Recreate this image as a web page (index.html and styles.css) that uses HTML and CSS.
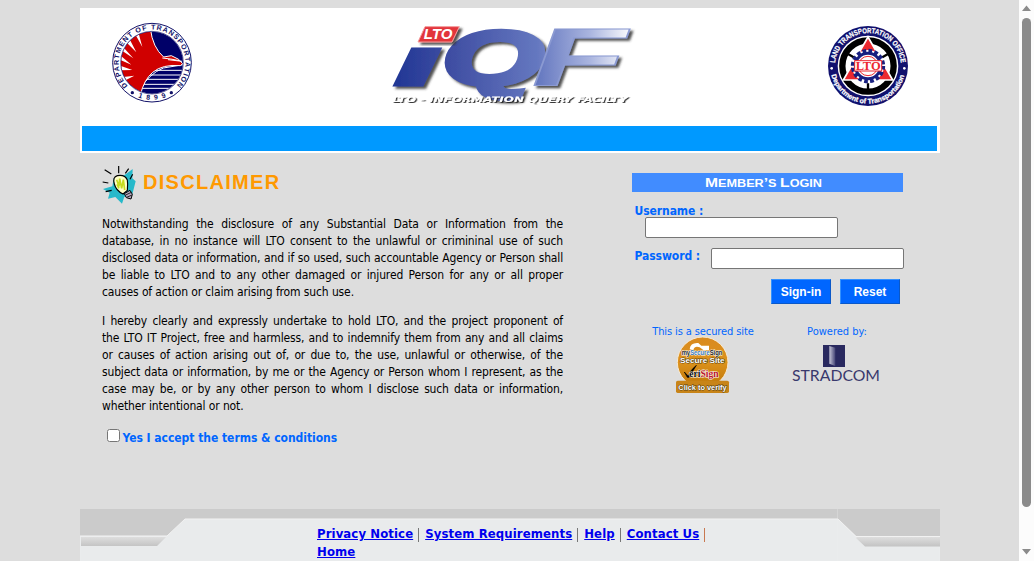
FILE: index.html
```html
<!DOCTYPE html>
<html lang="en">
<head>
<meta charset="utf-8">
<title>LTO - Information Query Facility</title>
<link rel="stylesheet" href="styles.css">
</head>
<body>
<div class="viewport">
<div class="page">
  <header class="header">
    <div class="logos">
      <svg class="dot-seal" viewBox="0 0 300 285" width="100" height="95">
        <defs>
          <clipPath id="disc"><circle cx="156" cy="143" r="93"/></clipPath>
          <path id="dotTop" d="M85 214A100 100 0 1 1 227 214"/>
          <path id="dotBottom" d="M86 230A112 112 0 0 0 226 230"/>
        </defs>
        <circle cx="156" cy="143" r="118" fill="#fff" stroke="#111168" stroke-width="3"/>
        <g clip-path="url(#disc)">
          <rect x="60" y="45" width="190" height="195" fill="#000068"/>
          <path d="M112 232Q148 175 190 159L250 149M128 208H236M137 193H250M147 180H250M162 166H250M118 220H230" stroke="#fff" stroke-width="3" fill="none"/>
          <path d="M55 40H151Q158 98 191 126L214 122L236 133L248 146L241 152Q188 147 158 172Q132 194 121 240H55Z" fill="#d00000" stroke="#fff" stroke-width="3"/>
          <path d="M187 129L212 132L238 137M204 134L246 139" stroke="#fff" stroke-width="3" fill="none"/>
          <path d="M127 96L97 42L114 48ZM109 112L67 70L82 59ZM100 130L55 100L62 88ZM94 149L55 132L58 119ZM97 165L58 166L57 151ZM103 182L66 201L60 187Z" fill="#fff"/>
        </g>
        <circle cx="156" cy="143" r="94" fill="none" stroke="#111168" stroke-width="2"/>
        <text class="seal-text" font-size="21"><textPath href="#dotTop" startOffset="2" textLength="464">DEPARTMENT OF TRANSPORTATION</textPath></text>
        <text class="seal-text" font-size="21"><textPath href="#dotBottom" startOffset="33" textLength="86">1899</textPath></text>
        <circle cx="97" cy="233" r="5" fill="#111168"/><circle cx="214" cy="233" r="5" fill="#111168"/>
      </svg>
      <svg class="iqf" viewBox="0 0 795 300" width="265" height="100">
        <defs>
          <linearGradient id="blue" gradientUnits="userSpaceOnUse" x1="45" y1="0" x2="755" y2="0">
            <stop offset="0" stop-color="#223795"/><stop offset=".25" stop-color="#4150a4"/><stop offset=".6" stop-color="#6578c0"/><stop offset=".82" stop-color="#aab5df"/><stop offset="1" stop-color="#fff"/>
          </linearGradient>
          <filter id="drop" x="-10%" y="-10%" width="125%" height="130%"><feDropShadow dx="8" dy="7" stdDeviation="2.5" flood-color="#333" flood-opacity=".85"/></filter>
          <filter id="drop2" x="-10%" y="-30%" width="125%" height="180%"><feDropShadow dx="4" dy="3" stdDeviation="1" flood-color="#222" flood-opacity=".9"/></filter>
        </defs>
        <g class="iqf-letters" filter="url(#drop)" fill="url(#blue)">
          <text x="39" y="209" font-size="206" textLength="142" lengthAdjust="spacingAndGlyphs" stroke-width="9" stroke="url(#blue)">ı</text>
          <text x="184" y="208" font-size="230" textLength="304" lengthAdjust="spacingAndGlyphs" stroke-width="14" stroke="url(#blue)">Q</text>
          <text x="452" y="213" font-size="242" textLength="284" lengthAdjust="spacingAndGlyphs" stroke-width="3" stroke="#8b9ad2">F</text>
        </g>
        <path d="M132 35H235L213 81H111Z" fill="#e2343a" stroke="#f49a9a" stroke-width="3" filter="url(#drop)"/>
        <text class="iqf-tag" x="128" y="73" font-size="43" textLength="86" lengthAdjust="spacingAndGlyphs">LTO</text>
        <text class="iqf-sub" x="34" y="261" font-size="23" textLength="706" lengthAdjust="spacingAndGlyphs" filter="url(#drop2)">LTO - INFORMATION QUERY FACILTY</text>
      </svg>
      <svg class="lto-seal" viewBox="0 0 300 300" width="100" height="100">
        <defs>
          <path id="ltoTop" d="M45 153A99 99 0 1 1 243 153"/>
          <path id="ltoBottom" d="M33 174A113 113 0 0 0 255 174"/>
        </defs>
        <circle cx="144" cy="153" r="120" fill="#11116e"/>
        <circle cx="144" cy="153" r="91" fill="#fff"/>
        <circle cx="144" cy="153" r="77" fill="none" stroke="#000" stroke-width="19"/>
        <path d="M144 205V236M75 112L101 127M213 112L187 127" stroke="#000" stroke-width="7"/>
        <path d="M144 66L218 195H70Z" fill="#ec2930" stroke="#fff" stroke-width="5"/>
        <circle cx="144" cy="153" r="48" fill="#fff"/>
        <circle cx="144" cy="153" r="45" fill="none" stroke="#182080" stroke-width="13" stroke-dasharray="11 6.67"/>
        <circle cx="144" cy="153" r="38" fill="#fff" stroke="#182080" stroke-width="9"/>
        <circle cx="144" cy="153" r="29" fill="none" stroke="#ec2930" stroke-width="3"/>
        <rect x="104" y="137" width="81" height="31" fill="#fff" stroke="#ec2930" stroke-width="3"/>
        <text class="lto-mark" x="107" y="164" font-size="35" textLength="75" lengthAdjust="spacingAndGlyphs">LTO</text>
        <text class="ring-text" font-size="22"><textPath href="#ltoTop" startOffset="9" textLength="292" lengthAdjust="spacingAndGlyphs">LAND TRANSPORTATION OFFICE</textPath></text>
        <text class="ring-text" font-size="21"><textPath href="#ltoBottom" startOffset="6" textLength="298" lengthAdjust="spacingAndGlyphs">Department of Transportation</textPath></text>
        <circle cx="35" cy="160" r="4" fill="#fff"/><circle cx="253" cy="160" r="4" fill="#fff"/>
      </svg>
    </div>
    <div class="bar"></div>
  </header>

  <main class="content">
    <section class="disclaimer">
      <h1 class="title">
        <svg viewBox="0 0 105 120" width="35" height="40">
          <path d="M3 72L31 64L35 40L68 30L92 12L91 40L101 49L92 84L88 98L67 95L60 116L40 96L18 101L23 83Z" fill="#27b9ca"/>
          <path d="M8 14L28 27M50 3V25M80 11L70 25M92 28L84 43M2 51L19 54M11 80L29 76" stroke="#000" stroke-width="3.500"/>
          <path d="M37 57Q31 36 46 32Q69 28 76 45Q78 56 76 76L63 87Q42 77 37 57Z" fill="#ffffc8" stroke="#000" stroke-width="3.500"/>
          <path d="M44 44L51 64L53 41L59 70L64 44L68 75M51 70L45 58" fill="none" stroke="#c7dc20" stroke-width="5"/>
          <path d="M67 86L84 76L91 88L87 102L73 98Z" fill="#b9a9c3" stroke="#000" stroke-width="3"/>
          <path d="M71 90L88 82M74 97L90 90" stroke="#222" stroke-width="3"/>
        </svg>
        <span class="title-text">DISCLAIMER</span>
      </h1>
      <p class="terms">
        <span>Notwithstanding the disclosure of any Substantial Data or Information from the</span>
        <span>database, in no instance will LTO consent to the unlawful or crimininal use of such</span>
        <span>disclosed data or information, and if so used, such accountable Agency or Person shall</span>
        <span>be liable to LTO and to any other damaged or injured Person for any or all proper</span>
        <span class="end">causes of action or claim arising from such use.</span>
      </p>
      <p class="terms">
        <span>I hereby clearly and expressly undertake to hold LTO, and the project proponent of</span>
        <span>the LTO IT Project, free and harmless, and to indemnify them from any and all claims</span>
        <span>or causes of action arising out of, or due to, the use, unlawful or otherwise, of the</span>
        <span>subject data or information, by me or the Agency or Person whom I represent, as the</span>
        <span>case may be, or by any other person to whom I disclose such data or information,</span>
        <span class="end">whether intentional or not.</span>
      </p>
      <label class="accept"><input type="checkbox">Yes I accept the terms &amp; conditions</label>
    </section>

    <section class="login">
      <svg class="login-head" viewBox="0 0 271 19" width="271" height="19">
        <rect width="271" height="19" fill="#418cff"/>
        <text x="73" y="14" textLength="117" lengthAdjust="spacingAndGlyphs"><tspan font-size="13">M</tspan><tspan font-size="10.5">EMBER</tspan><tspan font-size="13">’</tspan><tspan font-size="10.5">S </tspan><tspan font-size="13">L</tspan><tspan font-size="10.5">OGIN</tspan></text>
      </svg>
      <div class="field user"><label for="u">Username :</label><input id="u" type="text"></div>
      <div class="field pass"><label for="p">Password :</label><input id="p" type="password"></div>
      <div class="buttons"><button>Sign-in</button><button>Reset</button></div>
      <div class="badges">
        <div class="badge"><span class="secured">This is a secured site</span>
          <svg viewBox="108 60 165 180" width="55" height="60">
            <defs><linearGradient id="gold" x2="0" y2="1"><stop stop-color="#d98a20"/><stop offset=".5" stop-color="#dc921c"/><stop offset="1" stop-color="#bd7508"/></linearGradient></defs>
            <circle cx="188" cy="142" r="76" fill="url(#gold)" stroke="#f8ead3" stroke-width="3"/>
            <path d="M149 103Q151 82 175 84L184 92H207V105H190L179 97Q164 91 160 105Z" fill="#fff"/>
            <text class="vs" x="125" y="119" font-size="20" textLength="122" lengthAdjust="spacingAndGlyphs" fill="#222" stroke="#fff" stroke-width="3" paint-order="stroke">my<tspan fill="#3979b9">Secure</tspan>Sign</text>
            <text class="vs" x="120" y="145" font-size="23" textLength="134" lengthAdjust="spacingAndGlyphs" fill="#fff" stroke="#56400f" stroke-width="3" paint-order="stroke">Secure Site</text>
            <path d="M133 171L145 184Q151 165 169 151L147 187H142Z" fill="#000" stroke="#000" stroke-width="2"/>
            <text class="veri" x="148" y="185" font-size="28" textLength="88" lengthAdjust="spacingAndGlyphs" fill="#111" stroke="#fff" stroke-width="3" paint-order="stroke">eri<tspan fill="#ba162d">Sign</tspan></text>
            <rect x="108" y="197" width="159" height="37" rx="5" fill="#c88418"/>
            <text class="vs" x="115" y="224" font-size="24" textLength="145" lengthAdjust="spacingAndGlyphs" fill="#fff" stroke="#493916" stroke-width="3" paint-order="stroke">Click to verify</text>
          </svg>
        </div>
        <div class="badge powered"><span class="by">Powered by:</span>
          <svg viewBox="450 90 276 120" width="92" height="40">
            <defs><linearGradient id="door"><stop stop-color="#c5c5d6"/><stop offset="1" stop-color="#434375"/></linearGradient></defs>
            <rect x="549" y="93" width="66" height="66" fill="#29295f"/>
            <path d="M568 96L586 101V156L568 149Z" fill="url(#door)"/>
            <text class="strad" x="456" y="201" font-size="48" textLength="264" lengthAdjust="spacingAndGlyphs">STRADCOM</text>
          </svg>
        </div>
      </div>
    </section>
  </main>

  <footer class="footer">
    <svg class="footer-art" viewBox="0 0 860 52" width="860" height="52">
      <defs><linearGradient id="strip" x2="0" y2="1"><stop stop-color="#dedede"/><stop offset="1" stop-color="#c3c3c3"/></linearGradient></defs>
      <rect width="860" height="52" fill="#e9ebec"/>
      <path d="M0 0H860V27H776L758 10H105L87 27H0Z" fill="#cbcbcb"/>
      <path d="M1 28H86L77 37H1ZM777 28H860V37.500H785L776 29Z" fill="url(#strip)"/>
      <path d="M0 27H87L105 10H758L776 27.500H860" fill="none" stroke="#f2f2f2"/>
      <path d="M.5 27V52M859.500 38V52M757.500 0V52" fill="none" stroke="#eee" stroke-opacity=".3"/>
    </svg>
    <nav class="links"><a href="#">Privacy Notice</a><i></i><a href="#">System Requirements</a><i></i><a href="#">Help</a><i></i><a href="#">Contact Us</a><i class="last"></i><a href="#">Home</a></nav>
  </footer>
</div>
<aside class="scroll">
  <svg viewBox="0 0 15 561" width="15" height="561"><path d="M3 11L7.500 5.500L12 11ZM3 549L7.500 554.500L12 549Z" fill="#8b8b8b"/><rect x="3" y="18" width="9" height="489" rx="4.500" fill="#8b8b8b"/></svg>
</aside>
</div>
</body>
</html>
```
FILE: styles.css
```css
* { box-sizing: border-box; }
body { margin: 0; background: #ddd; font-family: "DejaVu Sans Condensed", "DejaVu Sans", sans-serif; font-stretch: condensed; overflow: hidden; }
svg { display: block; flex: none; }
.viewport { display: flex; justify-content: space-between; height: 561px; }
.page { width: 860px; margin-left: 80px; padding-top: 8px; display: flex; flex-direction: column; }
.header { height: 145px; background: #fff; padding: 0 3px 2px 2px; display: flex; flex-direction: column; flex: none; }
.logos { height: 118px; display: flex; padding: 7px 17px 0 18px; justify-content: space-between; }
.iqf { margin-left: 7px; }
.bar { height: 25px; background: #09f; }
.seal-text { font-family: "Liberation Sans", sans-serif; font-weight: bold; fill: #111168; }
.iqf-letters { font-family: "Liberation Sans", sans-serif; font-weight: bold; font-style: italic; }
.iqf-tag { font-family: "Liberation Sans", sans-serif; font-weight: bold; font-style: italic; fill: #fff; }
.iqf-sub { font-family: "DejaVu Sans", sans-serif; font-weight: bold; font-style: italic; fill: #fff; }
.lto-mark { font-family: "Liberation Serif", serif; font-weight: bold; fill: #ec2930; }
.ring-text { font-family: "Liberation Sans", sans-serif; font-weight: bold; fill: #fff; stroke: #fff; stroke-width: .7; }

.content { height: 356px; flex: none; display: flex; justify-content: space-between; padding: 12px 36px 0 22px; }
.disclaimer { width: 461px; }
.title { margin: 0; display: flex; height: 40px; gap: 6px; }
.title-text { font: bold 20px/34px "Liberation Sans", sans-serif; letter-spacing: 1.3px; color: #f90; }
.terms { margin: 11px 0 12px; font-size: 12px; line-height: 17px; color: #000; }
.terms + .terms { margin-top: 0; }
.terms span { display: block; white-space: nowrap; text-align: justify; text-align-last: justify; letter-spacing: -.15px; }
.terms .end { text-align-last: left; letter-spacing: -.12px; }
.accept { display: flex; align-items: center; height: 18px; margin-top: 14px; font-size: 12px; font-weight: bold; color: #06f; letter-spacing: -.03px; }
.accept input { margin: 0 2.5px 5px 5px; width: 13px; height: 13px; }
.login { width: 272px; padding-top: 8px; display: flex; flex-direction: column; }
.login-head text { font-family: "Liberation Sans", sans-serif; font-weight: bold; fill: #fff; }
.field { font-size: 12px; font-weight: bold; color: #06f; line-height: 15px; }
.field label { display: block; width: max-content; letter-spacing: -.08px; }
.field input { display: block; width: 193px; height: 21px; border: 1px solid #767676; border-radius: 2px; background: #fff; }
.user { padding: 12px 0 0 2.5px; }
.user input { margin: -2px 0 0 10.5px; }
.pass { display: flex; justify-content: space-between; padding: 10px 0 0 2.5px; }
.pass label { padding-top: 1px; }
.buttons { display: flex; gap: 9px; justify-content: flex-end; padding: 10px 4px 0 0; }
.buttons button { width: 60px; height: 25px; padding: 0; border: 1px solid #0a58c8; border-top-color: #3391ff; border-left-color: #3391ff; background: #06f; color: #fff; font: bold 12px "Liberation Sans", sans-serif; }
.badges { display: flex; padding: 20px 0 0 20px; font-size: 11px; line-height: 15px; color: #06f; }
.badge { width: 102px; display: flex; flex-direction: column; align-items: center; white-space: nowrap; }
.secured { letter-spacing: -.1px; }
.badge svg { margin-top: -4px; }
.powered { width: 92px; margin-left: 37px; }
.powered svg { margin: 5px 2px 0 0; overflow: visible; }
.vs { font-family: "Liberation Sans", sans-serif; font-weight: bold; }
.veri { font-family: "Liberation Serif", serif; font-weight: bold; }
.strad { font-family: Lato, sans-serif; fill: #39396d; }
.footer { display: grid; height: 52px; flex: none; }
.footer-art, .links { grid-area: 1 / 1; }
.links { padding: 16px 0 0 237px; width: 636px; height: 52px; display: flex; flex-wrap: wrap; align-content: flex-start; align-items: center; font-size: 13px; font-weight: bold; line-height: 18px; letter-spacing: .1px; white-space: nowrap; }
.links a { color: #00e; }
.links i { width: 1px; height: 14px; margin: 2px 6px 0 5px; background: #777; }
.links .last { background: #c87850; margin-right: 2px; }
.scroll { width: 15px; background: #fcfcfc; }
```
